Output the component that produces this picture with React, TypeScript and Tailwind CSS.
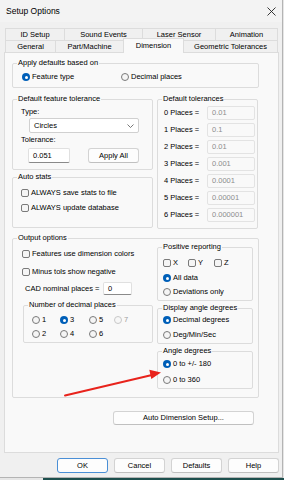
import React from "react";

const Radio = ({ checked = false, disabled = false }: { checked?: boolean; disabled?: boolean }) => (
  <span
    className={
      checked
        ? "w-[8px] h-[8px] rounded-full shrink-0 flex items-center justify-center bg-[#005fb8]"
        : disabled
        ? "w-[8px] h-[8px] rounded-full shrink-0 border border-[#c8c8c8] bg-[#f7f7f7]"
        : "w-[8px] h-[8px] rounded-full shrink-0 border border-[#7a7a7a] bg-[#f5f5f5]"
    }
  >
    {checked && <span className="w-[3px] h-[3px] rounded-full bg-white" />}
  </span>
);

const RadioItem = ({ label, checked = false, disabled = false, className = "" }: { label: string; checked?: boolean; disabled?: boolean; className?: string }) => (
  <div className={`flex items-center gap-[2px] h-[10px] ${className}`}>
    <Radio checked={checked} disabled={disabled} />
    <span className={disabled ? "text-[#a0a0a0] whitespace-nowrap" : "whitespace-nowrap"}>{label}</span>
  </div>
);

const Check = ({ label, className = "" }: { label: string; className?: string }) => (
  <div className={`flex items-center gap-[2px] h-[10px] ${className}`}>
    <span className="w-[8px] h-[8px] rounded-[2px] shrink-0 border border-[#7a7a7a] bg-[#f5f5f5]" />
    <span className="whitespace-nowrap">{label}</span>
  </div>
);

const Group = ({ label, className = "", children }: { label: string; className?: string; children?: React.ReactNode }) => (
  <div className={`relative border border-[#dcdcdc] rounded-[2px] ${className}`}>
    <span className="absolute -top-[6px] left-[4px] px-[1px] leading-[10px] bg-[#f9f9f9] whitespace-nowrap">{label}</span>
    {children}
  </div>
);

const Btn = ({ label, className = "" }: { label: string; className?: string }) => (
  <div className={`flex items-center justify-center rounded-[3px] bg-[#fdfdfd] border border-[#d3d3d3] border-b-[#c0c0c0] ${className}`}>
    {label}
  </div>
);

const TolRow = ({ n, v }: { n: number; v: string }) => (
  <div className="flex items-center h-[14px]">
    <span className="w-[43px] whitespace-nowrap">{n} Places =</span>
    <div className="w-[48px] h-[14px] rounded-[2px] border border-[#e3e3e3] bg-[#f9f9f9] text-[#8c8c8c] pl-[4px] flex items-center">{v}</div>
  </div>
);

export default function App() {
  return (
    <div className="relative w-[284px] h-[480px] bg-[#e6e6e6] font-['Liberation_Sans',Arial,sans-serif] text-[7.5px] leading-[10px] text-black overflow-hidden">
      <div className="w-[283px] h-[478px] bg-[#f0f0f0] border-r border-b border-[#b4b4b4] flex flex-col">
        {/* Title bar */}
        <div className="h-[22px] flex items-center justify-between pl-[6px] pr-[5px] bg-[#f3f3f3]">
          <span className="text-[8.5px]">Setup Options</span>
          <svg width="9" height="9" viewBox="0 0 9 9" className="mr-[1px]">
            <path d="M0.5 0.5 L8.5 8.5 M8.5 0.5 L0.5 8.5" stroke="#222" strokeWidth="0.9" fill="none" />
          </svg>
        </div>

        {/* Tabs */}
        <div className="mt-[6px] ml-[5px] flex h-[12px]">
          <div className="w-[59px] border-t border-l border-[#dcdcdc] flex items-center justify-center">ID Setup</div>
          <div className="w-[78px] border-t border-l border-[#dcdcdc] flex items-center justify-center">Sound Events</div>
          <div className="w-[73px] border-t border-l border-[#dcdcdc] flex items-center justify-center">Laser Sensor</div>
          <div className="w-[63px] border-t border-l border-r border-[#dcdcdc] flex items-center justify-center">Animation</div>
        </div>
        <div className="ml-[5px] flex items-end h-[12px]">
          <div className="w-[50px] h-[12px] border-t border-l border-[#dcdcdc] flex items-center justify-center">General</div>
          <div className="w-[68px] h-[12px] border-t border-l border-[#dcdcdc] flex items-center justify-center">Part/Machine</div>
          <div className="relative z-10 w-[61px] h-[15px] -mb-[1px] border-t border-l border-r border-[#dcdcdc] bg-[#f9f9f9] flex items-start justify-center pt-[2px]">Dimension</div>
          <div className="w-[94px] h-[12px] border-t border-r border-[#dcdcdc] flex items-center justify-center">Geometric Tolerances</div>
        </div>

        {/* Panel */}
        <div className="ml-[4px] w-[275px] h-[401px] border border-[#dcdcdc] bg-[#f9f9f9] pl-[7px] pt-[10px]">
          <Group label="Apply defaults based on" className="w-[247px] h-[25px]">
            <div className="flex pl-[9px] pt-[8px]">
              <RadioItem label="Feature type" checked className="w-[99px]" />
              <RadioItem label="Decimal places" />
            </div>
          </Group>

          <div className="mt-[11px] flex items-start gap-[4px]">
            <div className="w-[141px] flex flex-col">
              <Group label="Default feature tolerance" className="h-[71px]">
                <div className="flex flex-col pl-[8px] pt-[7px]">
                  <span className="h-[10px]">Type:</span>
                  <div className="mt-[1px] ml-[8px] w-[110px] h-[15px] rounded-[2px] border border-[#d0d0d0] bg-white flex items-center justify-between pl-[4px] pr-[4px]">
                    <span>Circles</span>
                    <svg width="7" height="4" viewBox="0 0 7 4">
                      <path d="M0.5 0.5 L3.5 3.5 L6.5 0.5" stroke="#555" strokeWidth="0.8" fill="none" />
                    </svg>
                  </div>
                  <span className="mt-[2px] h-[10px]">Tolerance:</span>
                  <div className="mt-[3px] flex items-center">
                    <div className="ml-[7px] w-[42px] h-[15px] rounded-[2px] border border-[#e0e0e0] border-b-[#8a8a8a] bg-white pl-[4px] flex items-center">0.051</div>
                    <Btn label="Apply All" className="ml-[18px] w-[51px] h-[15px]" />
                  </div>
                </div>
              </Group>
              <Group label="Auto stats" className="mt-[7px] h-[51px]">
                <div className="flex flex-col gap-[5px] pl-[8px] pt-[10px]">
                  <Check label="ALWAYS save stats to file" />
                  <Check label="ALWAYS update database" />
                </div>
              </Group>
            </div>
            <Group label="Default tolerances" className="w-[101px] h-[130px]">
              <div className="flex flex-col gap-[3px] pl-[6px] pt-[6px]">
                <TolRow n={0} v="0.01" />
                <TolRow n={1} v="0.1" />
                <TolRow n={2} v="0.01" />
                <TolRow n={3} v="0.001" />
                <TolRow n={4} v="0.0001" />
                <TolRow n={5} v="0.00001" />
                <TolRow n={6} v="0.000001" />
              </div>
            </Group>
          </div>

          <Group label="Output options" className="mt-[9px] w-[247px] h-[160px]">
            <div className="flex">
              <div className="w-[140px] pl-[9px] pt-[10px] flex flex-col">
                <Check label="Features use dimension colors" />
                <Check label="Minus tols show negative" className="mt-[8px]" />
                <div className="mt-[5px] ml-[3px] flex items-center h-[13px]">
                  <span className="w-[78px] whitespace-nowrap">CAD nominal places =</span>
                  <div className="w-[29px] h-[13px] rounded-[2px] border border-[#e0e0e0] border-b-[#8a8a8a] bg-white pl-[4px] flex items-center">0</div>
                </div>
                <Group label="Number of decimal places" className="mt-[10px] ml-[1px] w-[130px] h-[38px]">
                  <div className="grid grid-cols-[28px_29px_25px_20px] gap-y-[4px] pl-[8px] pt-[9px]">
                    <RadioItem label="1" />
                    <RadioItem label="3" checked />
                    <RadioItem label="5" />
                    <RadioItem label="7" disabled />
                    <RadioItem label="2" />
                    <RadioItem label="4" />
                    <RadioItem label="6" />
                  </div>
                </Group>
              </div>
              <div className="w-[96px] ml-[4px] pt-[8px] flex flex-col">
                <Group label="Positive reporting" className="h-[54px]">
                  <div className="flex flex-col pl-[5px] pt-[10px]">
                    <div className="flex">
                      <Check label="X" className="w-[25px]" />
                      <Check label="Y" className="w-[26px]" />
                      <Check label="Z" />
                    </div>
                    <RadioItem label="All data" checked className="mt-[5px]" />
                    <RadioItem label="Deviations only" className="mt-[4px]" />
                  </div>
                </Group>
                <Group label="Display angle degrees" className="mt-[7px] h-[36px]">
                  <div className="flex flex-col gap-[5px] pl-[5px] pt-[6px]">
                    <RadioItem label="Decimal degrees" checked />
                    <RadioItem label="Deg/Min/Sec" />
                  </div>
                </Group>
                <Group label="Angle degrees" className="mt-[7px] h-[38px]">
                  <div className="flex flex-col gap-[6px] pl-[5px] pt-[7px]">
                    <RadioItem label="0 to +/- 180" checked />
                    <RadioItem label="0 to 360" />
                  </div>
                </Group>
              </div>
            </div>
          </Group>

          <div className="mt-[13px] w-[247px] flex justify-end">
            <Btn label="Auto Dimension Setup..." className="mr-[5px] w-[141px] h-[14px]" />
          </div>
        </div>

        {/* Bottom buttons */}
        <div className="mt-[5px] pr-[3px] flex justify-end gap-[6px]">
          <Btn label="OK" className="w-[51px] h-[15px] !border-[#4a8fd6]" />
          <Btn label="Cancel" className="w-[51px] h-[15px]" />
          <Btn label="Defaults" className="w-[51px] h-[15px]" />
          <Btn label="Help" className="w-[51px] h-[15px]" />
        </div>
      </div>
      <div className="flex h-[2px]">
        <div className="w-[43px] bg-[#e6e6e6]" />
        <div className="flex-1 bg-[#1d4f4d]" />
      </div>

      {/* Red annotation arrow */}
      <svg className="absolute left-0 top-0 pointer-events-none" width="284" height="480" viewBox="0 0 284 480">
        <line x1="65" y1="395.5" x2="152" y2="375" stroke="#e8231c" strokeWidth="2" strokeLinecap="round" />
        <polygon points="161,372.5 149.3,369.8 151.3,379" fill="#e8231c" />
      </svg>
    </div>
  );
}
